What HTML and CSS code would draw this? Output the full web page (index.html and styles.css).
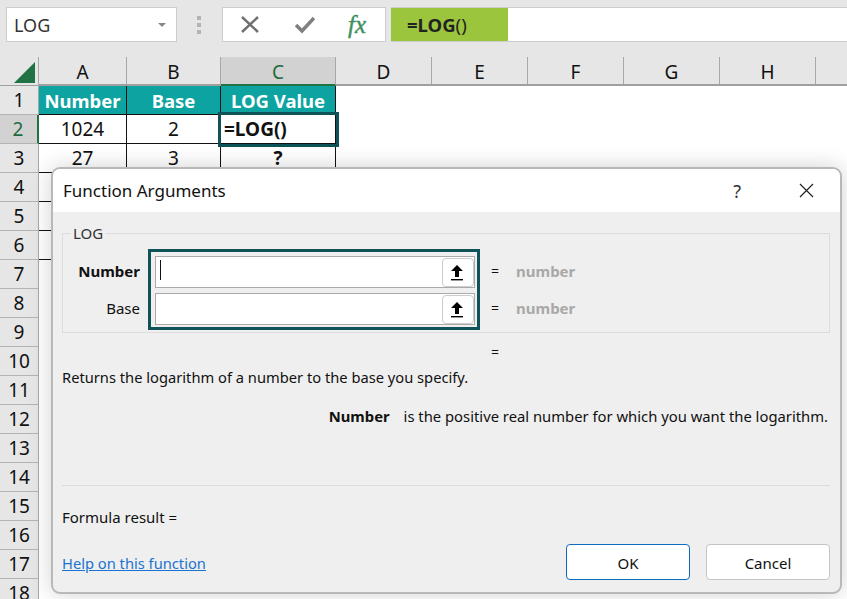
FILE: index.html
```html
<!DOCTYPE html>
<html lang="en">
<head>
    <meta charset="UTF-8">
    <title>Function Arguments</title>
    <link rel="stylesheet" href="styles.css">
</head>
<body>
    <div class="page">
        <div class="toolbar">
            <div class="name-box">
                <span>LOG</span>
                <span class="caret"></span>
            </div>
            <div class="grip"><i></i><i></i><i></i></div>
            <div class="fx-box">
                <svg class="tool-icon" width="20" height="20" viewBox="0 0 20 20"><path d="M1 2 L17 17 M17 2 L1 17" stroke="#707070" stroke-width="2.4" fill="none"/></svg>
                <svg class="tool-icon" width="20" height="20" viewBox="0 0 20 20"><path d="M1 10 L7 16 L19 3" stroke="#808080" stroke-width="3.6" fill="none"/></svg>
                <span class="fx">fx</span>
            </div>
            <div class="formula-bar">
                <span class="formula-text"><b>=LOG</b>()</span>
            </div>
        </div>

        <div class="sheet">
            <div class="row-heads">
                <div class="corner">
                    <svg width="22" height="21" viewBox="0 0 22 21"><polygon points="21,0 21,21 0,21" fill="#217346"/></svg>
                </div>
                <div class="row-head">1</div>
                <div class="row-head selected">2</div>
                <div class="row-head">3</div>
                <div class="row-head">4</div>
                <div class="row-head">5</div>
                <div class="row-head">6</div>
                <div class="row-head">7</div>
                <div class="row-head">8</div>
                <div class="row-head">9</div>
                <div class="row-head">10</div>
                <div class="row-head">11</div>
                <div class="row-head">12</div>
                <div class="row-head">13</div>
                <div class="row-head">14</div>
                <div class="row-head">15</div>
                <div class="row-head">16</div>
                <div class="row-head">17</div>
                <div class="row-head">18</div>
            </div>
            <div class="cells">
                <div class="col-heads">
                    <div class="col-head col-a">A</div>
                    <div class="col-head col-b">B</div>
                    <div class="col-head col-c selected">C</div>
                    <div class="col-head col-x">D</div>
                    <div class="col-head col-x">E</div>
                    <div class="col-head col-x">F</div>
                    <div class="col-head col-x">G</div>
                    <div class="col-head col-x">H</div>
                </div>
                <div class="data-table">
                    <div class="cell head">Number</div>
                    <div class="cell head">Base</div>
                    <div class="cell head">LOG Value</div>
                    <div class="cell">1024</div>
                    <div class="cell">2</div>
                    <div class="cell active">=LOG()</div>
                    <div class="cell">27</div>
                    <div class="cell">3</div>
                    <div class="cell strong">?</div>
                    <div class="cell"></div>
                    <div class="cell"></div>
                    <div class="cell"></div>
                    <div class="cell"></div>
                    <div class="cell"></div>
                    <div class="cell"></div>
                    <div class="cell"></div>
                    <div class="cell"></div>
                    <div class="cell"></div>
                </div>
            </div>
        </div>

        <div class="dialog">
            <div class="dialog-title">
                <span class="title-text">Function Arguments</span>
                <span class="help">?</span>
                <svg class="close" width="15" height="15" viewBox="0 0 15 15"><path d="M1 1 L14 14 M14 1 L1 14" stroke="#222" stroke-width="1.2" fill="none"/></svg>
            </div>
            <div class="dialog-body">
                <fieldset class="group">
                    <legend>LOG</legend>
                    <div class="arg-labels">
                        <div class="arg-label strong">Number</div>
                        <div class="arg-label">Base</div>
                    </div>
                    <div class="arg-inputs">
                        <div class="arg-input">
                            <span class="text-cursor"></span>
                            <span class="pick">
                                <svg width="12" height="16" viewBox="0 0 12 16"><path d="M6 0 L12 6 L8 6 L8 12 L4 12 L4 6 L0 6 Z" fill="#000"/><rect y="14" width="12" height="1.4" fill="#000"/></svg>
                            </span>
                        </div>
                        <div class="arg-input">
                            <span class="pick">
                                <svg width="12" height="16" viewBox="0 0 12 16"><path d="M6 0 L12 6 L8 6 L8 12 L4 12 L4 6 L0 6 Z" fill="#000"/><rect y="14" width="12" height="1.4" fill="#000"/></svg>
                            </span>
                        </div>
                    </div>
                    <div class="arg-values">
                        <div class="arg-value"><span class="equals">=</span><span class="hint">number</span></div>
                        <div class="arg-value"><span class="equals">=</span><span class="hint">number</span></div>
                    </div>
                </fieldset>
                <div class="total-equals">=</div>
                <p class="description">Returns the logarithm of a number to the base you specify.</p>
                <p class="arg-help"><b>Number</b><span>is the positive real number for which you want the logarithm.</span></p>
                <hr class="rule">
                <p class="result">Formula result =</p>
                <div class="dialog-foot">
                    <a class="help-link" href="#">Help on this function</a>
                    <div class="buttons">
                        <button class="primary">OK</button>
                        <button>Cancel</button>
                    </div>
                </div>
            </div>
        </div>
    </div>
</body>
</html>
```

FILE: styles.css
```css
* {
    box-sizing: border-box;
}
html, body {
    margin: 0;
    height: 100%;
}
body {
    font-family: "Noto Sans", "Open Sans", sans-serif;
    color: #111;
    background-color: white;
    overflow: hidden;
}
.page {
    position: relative;
    width: 847px;
    height: 599px;
    overflow: hidden;
}

/* formula bar */
.toolbar {
    display: flex;
    align-items: flex-start;
    height: 57px;
    padding: 7px 0 0 6px;
    background-color: #e6e6e6;
}
.name-box {
    display: flex;
    align-items: center;
    justify-content: space-between;
    width: 171px;
    height: 35px;
    padding: 0 10px 0 7px;
    background-color: white;
    border: 1px solid #cdcdcd;
    font-size: 18px;
    color: #333;
}
.caret {
    border-left: 4px solid transparent;
    border-right: 4px solid transparent;
    border-top: 4px solid #888;
}
.grip {
    display: flex;
    flex-direction: column;
    gap: 3px;
    width: 45px;
    padding: 9px 0 0 20px;
}
.grip i {
    width: 4px;
    height: 4px;
    background-color: #b4b4b4;
}
.fx-box {
    display: flex;
    align-items: center;
    gap: 34px;
    width: 164px;
    height: 35px;
    padding-left: 18px;
    background-color: white;
    border: 1px solid #cdcdcd;
}
.fx {
    font-family: "Liberation Serif", serif;
    font-style: italic;
    font-size: 25px;
    color: #3f8f5f;
    -webkit-text-stroke: 0.4px #3f8f5f;
    margin-left: -1px;
}
.formula-bar {
    flex: 1;
    height: 35px;
    margin-left: 5px;
    background-color: white;
    border-top: 1px solid #cdcdcd;
    border-bottom: 1px solid #cdcdcd;
}
.formula-text {
    display: block;
    width: 117px;
    height: 33px;
    padding-left: 16px;
    line-height: 33px;
    font-size: 18.5px;
    color: #222;
    background-color: #9bc53d;
}

/* sheet */
.sheet {
    display: flex;
}
.row-heads {
    width: 39px;
    background-color: #e6e6e6;
    border-right: 1px solid #a8a8a8;
}
.corner {
    height: 29px;
    padding: 5px 0 0 14px;
    border-bottom: 1px solid #a0a0a0;
}
.corner svg {
    display: block;
}
.row-head {
    height: 29px;
    line-height: 29px;
    text-align: center;
    font-size: 19px;
    border-bottom: 1px solid #b4b4b4;
}
.row-head.selected {
    margin-right: -1px;
    padding-right: 1px;
    background-color: #d2d2d2;
    border-right: 2px solid #217346;
    color: #1e6b42;
}
.cells {
    flex: 1;
}
.col-heads {
    display: flex;
    height: 29px;
    background-color: #e6e6e6;
    border-bottom: 2px solid #a0a0a0;
}
.col-head {
    height: 27px;
    line-height: 30px;
    text-align: center;
    font-size: 19px;
    border-right: 1px solid #a8a8a8;
}
.col-a { width: 88px; }
.col-b { width: 94px; }
.col-c { width: 115px; }
.col-x { width: 96px; }
.col-head.selected {
    background-color: #d2d2d2;
    color: #1e6b42;
    height: 29px;
    border-bottom: 2px solid #217346;
}
.data-table {
    display: grid;
    grid-template-columns: 88px 94px 115px;
    grid-auto-rows: 29px;
    width: 297px;
}
.cell {
    line-height: 29px;
    text-align: center;
    font-size: 19px;
    border-right: 1px solid #111;
    border-bottom: 1px solid #111;
}
.cell.head {
    background-color: #0ca3a0;
    color: white;
    font-size: 18.5px;
    font-weight: bold;
}
.cell.active {
    position: relative;
    text-align: left;
    padding-left: 3px;
    font-weight: bold;
    outline: 3px solid #0f5257;
    outline-offset: 0;
}
.strong {
    font-weight: bold;
}

/* dialog */
.dialog {
    position: absolute;
    left: 51px;
    top: 167px;
    width: 791px;
    height: 427px;
    background-color: #efefef;
    border: 2px solid #b8b8b8;
    border-radius: 9px;
    box-shadow: 0 0 22px rgba(0,0,0,0.18);
    overflow: hidden;
}
.dialog-title {
    display: flex;
    align-items: center;
    height: 43px;
    padding: 0 26px 0 10px;
    background-color: white;
    font-size: 17px;
}
.title-text {
    flex: 1;
}
.help {
    margin-right: 58px;
    font-size: 18px;
    color: #333;
}
.dialog-body {
    padding: 14px 10px 0 9px;
    font-size: 14.8px;
}
.group {
    display: flex;
    height: 107px;
    margin: 0;
    padding: 0;
    border: 1px solid #dcdcdc;
}
.group legend {
    margin-left: 8px;
    padding: 0 2px;
    font-size: 15px;
    line-height: 1;
    color: #333;
}
.arg-labels {
    width: 77px;
    padding-top: 14px;
    font-size: 15px;
}
.arg-label {
    height: 37px;
    line-height: 32px;
    text-align: right;
}
.arg-inputs {
    display: flex;
    flex-direction: column;
    gap: 5px;
    width: 332px;
    height: 81px;
    margin: 8px 0 0 8px;
    padding: 4px 2px 2px 4px;
    border: 3px solid #0f5257;
}
.arg-input {
    position: relative;
    height: 32px;
    background-color: white;
    border: 1px solid #aaa;
}
.text-cursor {
    position: absolute;
    left: 4px;
    top: 3px;
    width: 1px;
    height: 20px;
    background-color: #111;
}
.pick {
    position: absolute;
    right: 0;
    top: 1px;
    display: flex;
    align-items: center;
    justify-content: center;
    width: 32px;
    height: 29px;
    padding-right: 2px;
    background-color: white;
    border: 1px solid #ccc;
    border-radius: 4px;
}
.arg-values {
    padding-top: 14px;
    font-size: 15px;
}
.arg-value {
    display: flex;
    height: 37px;
    line-height: 32px;
    padding-left: 11px;
}
.equals {
    width: 25px;
    font-size: 14px;
}
.hint {
    font-weight: bold;
    color: #a8a8a8;
}
.total-equals {
    height: 20px;
    margin-top: 9px;
    padding-left: 429px;
    font-size: 14px;
    line-height: 20px;
}
.description {
    margin: 5px 0 0;
    font-size: 14.7px;
    line-height: 20px;
}
.arg-help {
    display: flex;
    justify-content: flex-end;
    gap: 14px;
    margin: 19px 0 0;
    padding-right: 2px;
    line-height: 20px;
}
.rule {
    margin: 59px 0 0;
    border: 0;
    border-top: 1px solid #dcdcdc;
}
.result {
    margin: 21px 0 0;
    font-size: 15px;
    line-height: 20px;
}
.dialog-foot {
    display: flex;
    justify-content: space-between;
    align-items: center;
    margin-top: 17px;
}
.help-link {
    margin-top: 2px;
    font-size: 14.7px;
    color: #1a73d0;
    text-decoration: underline;
}
.buttons {
    display: flex;
    gap: 16px;
}
button {
    width: 124px;
    height: 36px;
    padding-top: 2px;
    background-color: white;
    border: 1px solid #c4c4c4;
    border-radius: 4px;
    font-family: inherit;
    font-size: 15px;
    color: #111;
}
button.primary {
    border-color: #0f6cbd;
}
```
